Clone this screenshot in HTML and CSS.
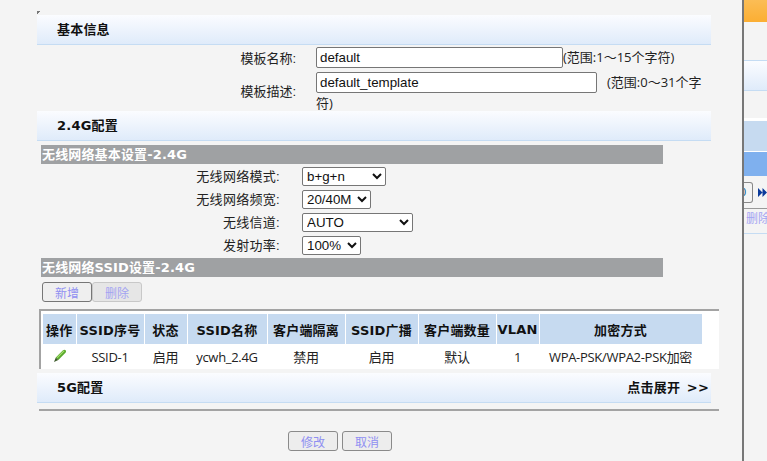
FILE: index.html
```html
<!DOCTYPE html>
<html lang="zh">
<head>
<meta charset="utf-8">
<title>模板配置</title>
<link rel="stylesheet" href="styles.css">
</head>
<body>
<div class="page">
  <main class="main">
    <div class="corner"></div>
    <h2 class="section"><span>基本信息</span></h2>
    <div class="form-row name-row">
      <label class="label">模板名称:</label>
      <input class="input input-name" value="default">
      <span class="hint">(范围:1～15个字符)</span>
    </div>
    <div class="form-row desc-row">
      <label class="label">模板描述:</label>
      <div class="desc-wrap"><input class="input input-desc" value="default_template"><span class="hint-gap">(范围:0～31个字符)</span></div>
    </div>
    <h2 class="section"><span>2.4G配置</span></h2>
    <div class="bar first-bar">无线网络基本设置-2.4G</div>
    <div class="select-rows">
      <label class="label2">无线网络模式:</label><select class="sel s1"><option>b+g+n</option></select>
      <label class="label2">无线网络频宽:</label><select class="sel s2"><option>20/40M</option></select>
      <label class="label2">无线信道:</label><select class="sel s3"><option>AUTO</option></select>
      <label class="label2">发射功率:</label><select class="sel s4"><option>100%</option></select>
    </div>
    <div class="bar">无线网络SSID设置-2.4G</div>
    <div class="actions">
      <button class="btn btn-active">新增</button><button class="btn btn-off">删除</button>
    </div>
    <div class="table-box">
      <table class="grid">
        <thead>
          <tr>
            <th class="c1">操作</th><th class="c2">SSID序号</th><th class="c3">状态</th><th class="c4">SSID名称</th><th class="c5">客户端隔离</th><th class="c6">SSID广播</th><th class="c7">客户端数量</th><th class="c8">VLAN</th><th class="c9">加密方式</th>
          </tr>
        </thead>
        <tbody>
          <tr>
            <td><svg class="pencil" viewBox="0 0 14 14" width="14" height="14"><path d="M2.800 8.500 10 1.200c.9-.8 2-.7 2.600 0 .6.700.6 1.700-.1 2.500L5.300 11Z" fill="#58a82c"/><path d="M3.600 8.400 10.600 1.500l1 .5-7 7Z" fill="#a8e070"/><path d="M2.800 8.500 5.300 11 1 13Z" fill="#3c5a2a"/></svg></td>
            <td>SSID-1</td><td>启用</td><td>ycwh_2.4G</td><td>禁用</td><td>启用</td><td>默认</td><td class="vlan">1</td><td>WPA-PSK/WPA2-PSK加密</td>
          </tr>
        </tbody>
      </table>
    </div>
    <h2 class="section section-5g"><span>5G配置</span><em>点击展开 &gt;&gt;</em></h2>
    <div class="rule"></div>
    <div class="footer">
      <button class="btn foot">修改</button><button class="btn foot">取消</button>
    </div>
  </main>
  <aside class="side">
    <div class="s-orange"></div>
    <div class="s-head"></div>
    <div class="s-light"></div>
    <div class="s-blue"></div>
    <div class="s-pager">
      <span class="s-box">0</span>
      <svg class="s-arrows" viewBox="0 0 9 9" width="9" height="9"><path d="M0 0 4.500 4.500 0 9ZM4.500 0 9 4.500 4.500 9Z" fill="#0b3a9b"/></svg>
    </div>
    <div class="s-del">删除</div>
    <div class="s-line"></div>
  </aside>
</div>
</body>
</html>
```

FILE: styles.css
```css
* { box-sizing: border-box; }
html, body { margin: 0; padding: 0; }
body { background: #f4f4f4; font-family: "Liberation Sans", "Noto Sans CJK SC", sans-serif; font-size: 13px; color: #222; }
.page { display: flex; width: 767px; height: 461px; overflow: hidden; }
.main { width: 742px; flex: none; padding: 11px 0 0 37px; }
.corner { width: 3px; height: 4px; background: linear-gradient(135deg, #777 50%, #f4f4f4 50%); }
.section { display: flex; justify-content: space-between; align-items: center; width: 674px; height: 30px; margin: 0; padding: 0 2px 2px 20px; font: bold 13px "DejaVu Sans", "Noto Sans CJK SC", sans-serif; letter-spacing: 0.2px; color: #111; background: linear-gradient(#fbfcff, #dfebfa); border-bottom: 1px solid #c5dcf3; }
.section em { font-style: normal; word-spacing: 2px; }
.form-row { display: flex; }
.label { width: 259px; margin-right: 20px; text-align: right; font-size: 13px; flex: none; }
.name-row { height: 26px; align-items: flex-start; padding-top: 2px; }
.name-row .label { padding-top: 4px; line-height: 15px; }
.desc-row { height: 40px; }
.desc-row .label { padding-top: 13px; line-height: 15px; }
.input { height: 21px; padding: 0 3px; border: 1px solid #767676; border-radius: 2px; background: #fff; font: 13.333px "Liberation Sans", sans-serif; color: #111; }
.input-name { width: 247px; }
.input-desc { width: 281px; vertical-align: top; }
.hint { font: 13px/20px "Open Sans", "Noto Sans CJK SC", sans-serif; letter-spacing: 0; white-space: nowrap; }
.desc-wrap { width: 386px; padding-top: 1px; font: 13px/20px "Open Sans", "Noto Sans CJK SC", sans-serif; }
.hint-gap { margin-left: 10px; }
.bar { width: 622px; height: 19px; margin-left: 4px; padding-left: 1px; background: #9fa1a3; color: #fff; font: bold 13px/19px "DejaVu Sans", "Noto Sans CJK SC", sans-serif; letter-spacing: 0.15px; }
.first-bar { margin-top: 4px; }
.select-rows { display: grid; grid-template-columns: 243px 1fr; column-gap: 22px; row-gap: 4px; padding-top: 3px; height: 94px; align-content: start; justify-items: start; }
.label2 { line-height: 19px; font-size: 13px; letter-spacing: 0.3px; width: 100%; text-align: right; }
.sel { height: 19px; font: 13.333px "Liberation Sans", sans-serif; color: #111; background: #fff; border: 1px solid #767676; border-radius: 2px; }
.s1 { width: 84px; } .s2 { width: 69px; } .s3 { width: 111px; } .s4 { width: 59px; }
.actions { display: flex; padding: 5px 0 0 5px; }
.btn { width: 50px; height: 20px; padding: 0; font: 12px "Liberation Sans", "Noto Sans CJK SC", sans-serif; color: #8f8ff2; background: #efefef; border: 1px solid #767676; border-radius: 3px; }
.btn-off { background: #e6e6e6; border-color: #c8c8c8; color: #a3a3f2; }
.table-box { width: 680px; height: 60px; margin: 7px 0 0 2px; padding: 3px 0 0 2px; background: #fff; border-top: 2px solid #a3a3a3; border-left: 2px solid #a3a3a3; overflow: hidden; }
.grid { width: 659px; table-layout: fixed; border-collapse: collapse; }
.grid th { height: 30px; padding: 0; background: #c6daf0; border-right: 1px solid #fff; font: bold 13px "DejaVu Sans", "Noto Sans CJK SC", sans-serif; letter-spacing: 0.2px; color: #111; white-space: nowrap; }
.grid td { height: 25px; padding: 0; text-align: center; font: 13px "Open Sans", "Noto Sans CJK SC", sans-serif; letter-spacing: -0.300px; color: #222; white-space: nowrap; }
.pencil { display: block; margin: 0 auto 2px; }
.vlan { color: #112a80; }
.c1 { width: 33px; } .c2 { width: 68px; } .c3 { width: 43px; } .c4 { width: 80px; } .c5 { width: 78px; } .c6 { width: 73px; } .c7 { width: 78px; } .c8 { width: 43px; } .c9 { width: 163px; }
.section-5g { margin-top: 4px; }
.rule { width: 680px; height: 2px; margin: 6px 0 0 2px; background: #a3a3a3; }
.footer { display: flex; gap: 4px; padding: 20px 0 0 251px; }
.foot { background: #ededed; border-color: #8a8a8a; }
.side { width: 25px; flex: none; border-left: 2px solid #777; overflow: hidden; }
.s-orange { height: 22px; background: linear-gradient(#fbbd55, #fbae33); }
.s-head { height: 31px; margin-top: 38px; background: linear-gradient(#fbfcff, #dfebfa); border-top: 1px solid #c5dcf3; border-bottom: 1px solid #c5dcf3; }
.s-light { height: 33px; margin-top: 27px; background: #c6daf0; border-top: 3px solid #fff; }
.s-blue { height: 25px; background: #7fb0ee; border-top: 1px solid #fff; }
.s-pager { display: flex; align-items: center; gap: 5px; height: 32px; }
.s-box { display: block; width: 10px; height: 21px; border: 1px solid #888; border-left: 0; border-radius: 0 3px 3px 0; font-size: 11px; line-height: 19px; color: #0b5a8c; text-indent: -4px; overflow: hidden; }
.s-arrows { flex: none; }
.s-del { height: 25px; padding: 2px 0 0 2px; border-top: 1px solid #999; color: #a3a3f2; font-size: 12px; white-space: nowrap; line-height: 16px; }
.s-line { height: 1px; background: #c5dcf3; }
```
